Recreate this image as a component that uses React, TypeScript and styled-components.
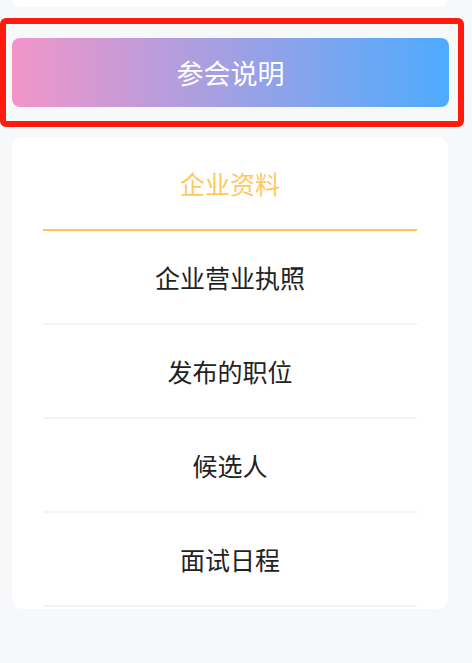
import React from 'react';
import styled, {createGlobalStyle} from 'styled-components';

const GlobalStyle = createGlobalStyle`
  body {
    margin: 0;
    background: #f7f8fa;
    font-family: "Noto Sans CJK SC", "Noto Sans", sans-serif;
  }
`;

const menu = ['企业营业执照', '发布的职位', '候选人', '面试日程'];

export default function App() {
    return (
        <Page>
            <GlobalStyle/>
            <TopCard/>
            <Highlight>
                <GradientButton>参会说明</GradientButton>
            </Highlight>
            <MenuCard>
                <MenuRow active>企业资料</MenuRow>
                {menu.map((item) => (
                    <MenuRow key={item}>{item}</MenuRow>
                ))}
            </MenuCard>
        </Page>
    );
}

const Page = styled.div`
  width: 472px;
  height: 663px;
  overflow: hidden;
`;

const TopCard = styled.div`
  height: 7px;
  margin: 0 25px 0 12px;
  background: #fff;
  border-radius: 0 0 9px 9px;
`;

const Highlight = styled.div`
  width: 464px;
  box-sizing: border-box;
  margin-top: 11px;
  border: 6px solid #ff1a0d;
  border-radius: 6px;
  padding: 14px 9px 14px 6px;
`;

const GradientButton = styled.div`
  height: 69px;
  border-radius: 8px;
  background: linear-gradient(to right, #f295c9, #4eabfe);
  color: #fff;
  font-size: 27px;
  display: flex;
  align-items: center;
  justify-content: center;
  cursor: pointer;
`;

const MenuCard = styled.div`
  width: 436px;
  box-sizing: border-box;
  margin: 10px 0 0 12px;
  padding: 0 31px;
  background: #fff;
  border-radius: 10px;
  height: 472px;
  overflow: hidden;
`;

const MenuRow = styled.div<{active?: boolean}>`
  height: 92px;
  display: flex;
  align-items: center;
  justify-content: center;
  font-size: 25px;
  color: ${(p) => (p.active ? '#ffc85f' : '#222')};
  border-bottom: 2px solid ${(p) => (p.active ? '#ffc552' : '#f3f4f6')};
`;
